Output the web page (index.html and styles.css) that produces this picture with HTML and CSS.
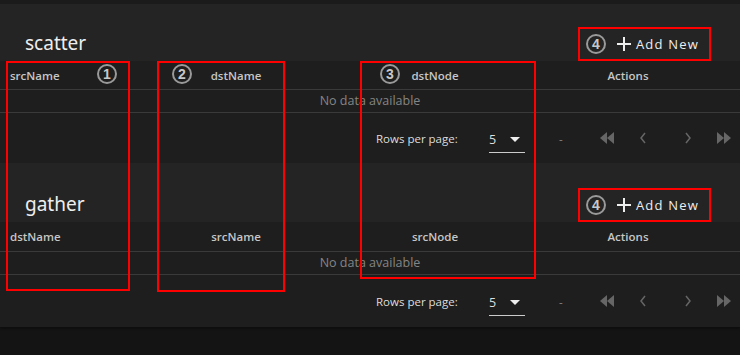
FILE: index.html
```html
<!DOCTYPE html>
<html lang="en">
<head>
  <meta charset="UTF-8">
  <meta name="viewport" content="width=device-width, initial-scale=1.0">
  <title>Routes</title>
  <link rel="stylesheet" href="styles.css">
</head>
<body>
  <div class="topbar"></div>

  <div class="card">
    <div class="card-head">
      <h2 class="title">scatter</h2>
      <button class="add-btn">
        <span class="num">4</span>
        <svg class="plus" width="14" height="14" viewBox="0 0 14 14"><path d="M7 0V14M0 7H14" /></svg>
        Add New
      </button>
    </div>
    <div class="table">
      <div class="thead">
        <div class="th first">srcName</div>
        <div class="th">dstName</div>
        <div class="th">dstNode</div>
        <div class="th">Actions</div>
      </div>
      <div class="empty">No data available</div>
      <div class="footer">
        <span class="rows-label">Rows per page:</span>
        <div class="select"><span>5</span><span class="caret"></span></div>
        <span class="range">-</span>
        <div class="pager">
          <svg width="16" height="12" viewBox="0 0 16 12"><polygon points="8,0 8,12 1,6" /><polygon points="15,0 15,12 8,6" /></svg>
          <svg class="gap" width="8" height="12" viewBox="0 0 8 12"><polyline points="6,1 2,6 6,11" /></svg>
          <svg class="gap-wide" width="8" height="12" viewBox="0 0 8 12"><polyline points="2,1 6,6 2,11" /></svg>
          <svg class="gap" width="16" height="12" viewBox="0 0 16 12"><polygon points="1,0 1,12 8,6" /><polygon points="8,0 8,12 15,6" /></svg>
        </div>
      </div>
    </div>
  </div>

  <div class="card">
    <div class="card-head">
      <h2 class="title">gather</h2>
      <button class="add-btn">
        <span class="num">4</span>
        <svg class="plus" width="14" height="14" viewBox="0 0 14 14"><path d="M7 0V14M0 7H14" /></svg>
        Add New
      </button>
    </div>
    <div class="table">
      <div class="thead">
        <div class="th first">dstName</div>
        <div class="th">srcName</div>
        <div class="th">srcNode</div>
        <div class="th">Actions</div>
      </div>
      <div class="empty">No data available</div>
      <div class="footer">
        <span class="rows-label">Rows per page:</span>
        <div class="select"><span>5</span><span class="caret"></span></div>
        <span class="range">-</span>
        <div class="pager">
          <svg width="16" height="12" viewBox="0 0 16 12"><polygon points="8,0 8,12 1,6" /><polygon points="15,0 15,12 8,6" /></svg>
          <svg class="gap" width="8" height="12" viewBox="0 0 8 12"><polyline points="6,1 2,6 6,11" /></svg>
          <svg class="gap-wide" width="8" height="12" viewBox="0 0 8 12"><polyline points="2,1 6,6 2,11" /></svg>
          <svg class="gap" width="16" height="12" viewBox="0 0 16 12"><polygon points="1,0 1,12 8,6" /><polygon points="8,0 8,12 15,6" /></svg>
        </div>
      </div>
    </div>
  </div>

  <!-- annotation overlay -->
  <div class="mark box-1"></div>
  <div class="mark box-2"></div>
  <div class="mark box-3"></div>
  <span class="num note-1">1</span>
  <span class="num note-2">2</span>
  <span class="num note-3">3</span>
</body>
</html>
```

FILE: styles.css
```css
body {
  font-family: "Open Sans", "Noto Sans", "Liberation Sans", sans-serif;
  background-color: #141414;
  color: #ddd;
  margin: 0;
  position: relative;
  height: 355px;
  overflow: hidden;
}
.topbar {
  height: 4px;
  background-color: #1b1b1b;
}
.card {
  background-color: #1e1e1e;
  box-shadow: 0 2px 2px rgba(0,0,0,0.3);
}
.card-head {
  height: 57px;
  background-color: #242424;
  display: flex;
  align-items: flex-end;
  justify-content: space-between;
  padding: 0 29px 0 25px;
  box-sizing: border-box;
}
.title {
  margin: 0 0 6px;
  font-family: "Noto Sans", sans-serif;
  font-size: 19px;
  font-weight: normal;
  color: #eee;
  line-height: 24px;
}
.add-btn {
  display: flex;
  align-items: center;
  height: 34px;
  padding: 0 10px 0 6px;
  background: #242424;
  border: 2px solid #f00;
  color: #eee;
  font-family: inherit;
  font-size: 13px;
  letter-spacing: 1.2px;
  box-sizing: border-box;
}
.plus {
  stroke: #eee;
  stroke-width: 2;
  margin: 0 5px 0 11px;
}
.num {
  display: inline-flex;
  align-items: center;
  justify-content: center;
  width: 20px;
  height: 20px;
  border: 2px solid #9a9a9a;
  border-radius: 50%;
  box-sizing: border-box;
  font-family: "Liberation Sans", sans-serif;
  font-size: 14px;
  font-weight: bold;
  color: #c8c8c8;
  letter-spacing: 0;
  line-height: 1;
}
.thead {
  display: grid;
  grid-template-columns: 118px 236px 162px 1fr;
  height: 28px;
  align-items: center;
  border-bottom: 1px solid #3a3a3a;
}
.th {
  font-size: 11.5px;
  font-weight: 600;
  color: #c6c6c6;
  text-align: center;
}
.th.first {
  text-align: left;
  padding-left: 10px;
}
.empty {
  height: 22px;
  line-height: 22px;
  text-align: center;
  font-size: 12.5px;
  color: #858585;
  border-bottom: 1px solid #3a3a3a;
}
.footer {
  height: 50px;
  display: flex;
  align-items: center;
  padding-left: 376px;
  font-size: 11.5px;
  color: #ddd;
}
.card + .card .card-head {
  height: 59px;
}
.card + .card .thead {
  height: 29px;
}
.card + .card .footer {
  height: 52px;
}
.rows-label {
  width: 113px;
}
.select {
  display: flex;
  align-items: center;
  width: 36px;
  height: 26px;
  margin-top: 4px;
  border-bottom: 1px solid #ccc;
  box-sizing: border-box;
  font-size: 12.5px;
}
.caret {
  margin-left: 14px;
  border-left: 5px solid transparent;
  border-right: 5px solid transparent;
  border-top: 5px solid #eee;
}
.range {
  margin-left: 34px;
  color: #888;
}
.pager {
  display: flex;
  align-items: center;
  margin-left: 36px;
}
.pager svg {
  fill: #666;
  stroke: #666;
  stroke-width: 1.5;
}
.pager svg polygon {
  stroke: none;
}
.pager svg polyline {
  fill: none;
}
.gap {
  margin-left: 24px;
}
.gap-wide {
  margin-left: 37px;
}
.mark {
  position: absolute;
  border: 2px solid #f00;
  box-sizing: border-box;
}
.box-1 { left: 6px; top: 61px; width: 124px; height: 230px; }
.box-2 { left: 157px; top: 61px; width: 128px; height: 231px; }
.box-3 { left: 360px; top: 61px; width: 176px; height: 218px; }
.note-1, .note-2, .note-3 {
  position: absolute;
  top: 64px;
}
.note-1 { left: 97px; }
.note-2 { left: 172px; }
.note-3 { left: 380px; }
```
